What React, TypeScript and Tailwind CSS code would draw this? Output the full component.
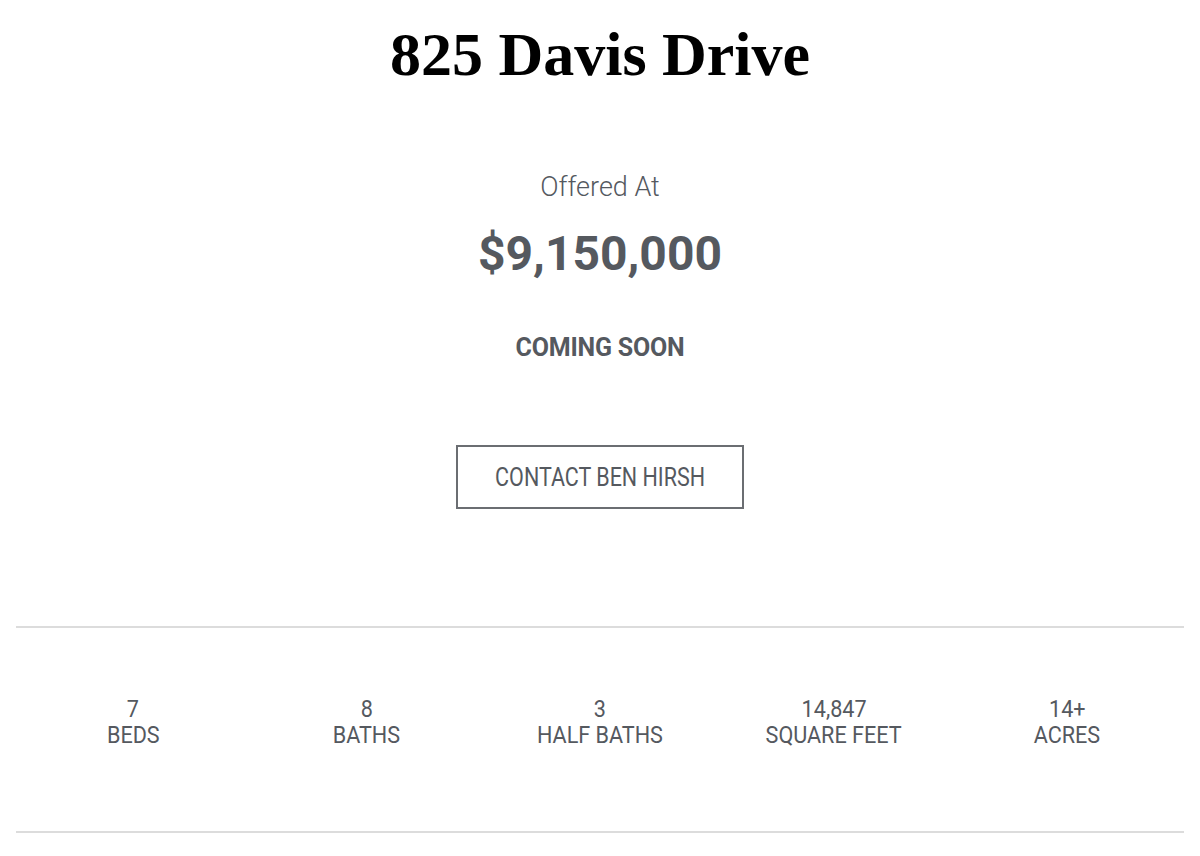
import React from "react";

const stats = [
  { value: "7", label: "BEDS" },
  { value: "8", label: "BATHS" },
  { value: "3", label: "HALF BATHS" },
  { value: "14,847", label: "SQUARE FEET" },
  { value: "14+", label: "ACRES" },
];

export default function App() {
  return (
    <main className="min-h-screen bg-white px-4 text-[#55595f] font-['Roboto',sans-serif]">
      {/* Title */}
      <h1 className="pt-[14px] text-center font-['Liberation_Serif',serif] text-[62px] font-bold leading-[80px] text-black">
        825 Davis Drive
      </h1>

      {/* Price block */}
      <div className="mt-[78px] flex flex-col items-center">
        <p className="text-[27px] font-light leading-[30px]">Offered At</p>
        <p className="mt-[24px] text-[48px] font-bold leading-[56px]">$9,150,000</p>
        <p className="mt-[51px] text-[25px] font-bold leading-[30px] tracking-[-0.2px]">
          COMING SOON
        </p>

        <button className="mt-[82px] flex h-[64px] w-[288px] items-center justify-center border-2 border-[#6b6e72] text-[25px] leading-none">
          <span className="inline-block scale-x-[0.86] whitespace-nowrap">CONTACT BEN HIRSH</span>
        </button>
      </div>

      {/* Stats */}
      <section className="mt-[117px] grid grid-cols-5 border-y-2 border-[#dcdcdc] pt-[68px] pb-[83px]">
        {stats.map((s) => (
          <div key={s.label} className="flex flex-col items-center text-[24px] leading-[26px]">
            <span className="inline-block scale-x-[0.9] whitespace-nowrap">{s.value}</span>
            <span className="inline-block scale-x-[0.9] whitespace-nowrap">{s.label}</span>
          </div>
        ))}
      </section>
    </main>
  );
}
